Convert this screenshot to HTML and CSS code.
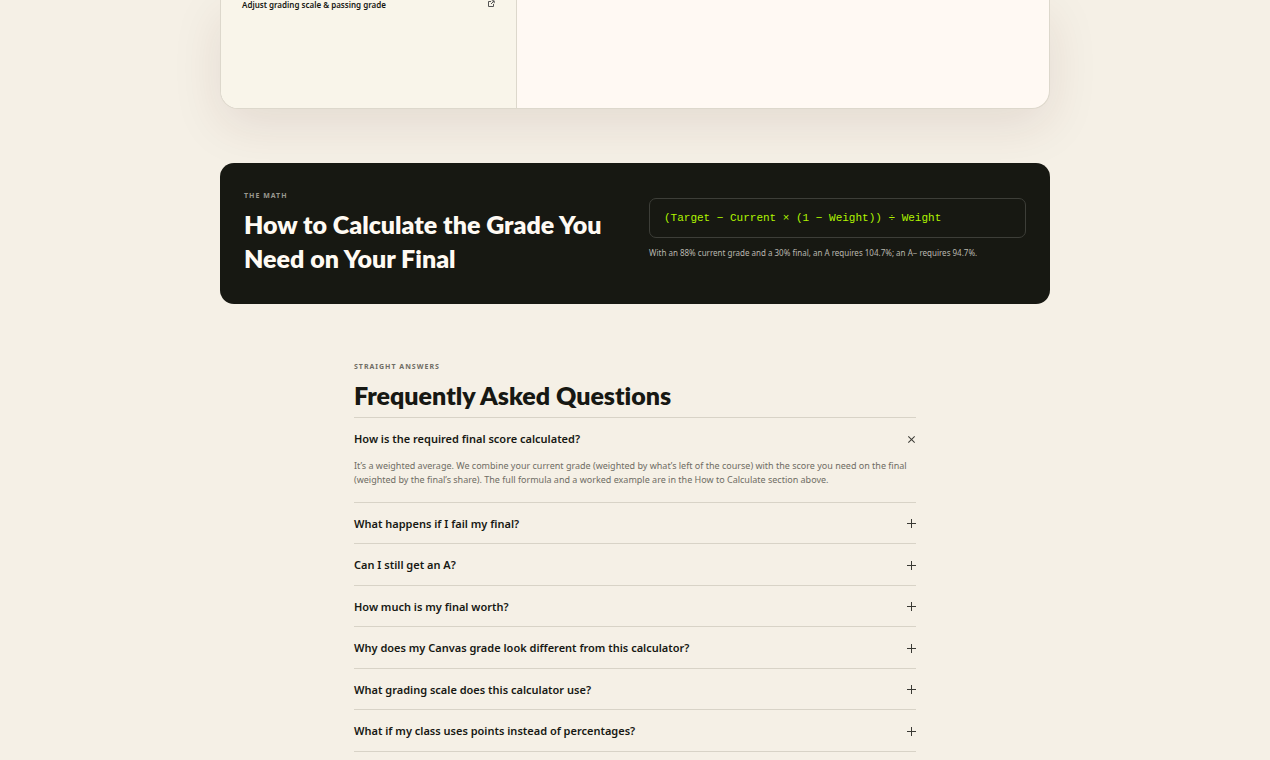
FILE: index.html
```html
<!DOCTYPE html>
<html lang="en">
<head>
    <meta charset="UTF-8">
    <meta name="viewport" content="width=device-width, initial-scale=1.0">
    <title>Final Grade Calculator</title>
    <link rel="stylesheet" href="styles.css">
</head>
<body>
    <main class="container">
        <section class="calculator">
            <div class="inputs">
                <a class="scale-link" href="#scale">
                    Adjust grading scale &amp; passing grade
                    <svg class="link-icon" viewBox="0 0 8 8" aria-hidden="true">
                        <path d="M4 1.5H1.5v5h5V4M4.8 .8h2.4v2.4M7 1 4 4"/>
                    </svg>
                </a>
            </div>
            <div class="results"></div>
        </section>

        <section class="math">
            <div>
                <p class="eyebrow">The math</p>
                <h2>How to Calculate the Grade You Need on Your Final</h2>
            </div>
            <div>
                <code class="formula">(Target − Current × (1 − Weight)) ÷ Weight</code>
                <p class="note">With an 88% current grade and a 30% final, an A requires 104.7%; an A− requires 94.7%.</p>
            </div>
        </section>

        <section class="faq">
            <p class="eyebrow">Straight answers</p>
            <h2>Frequently Asked Questions</h2>
            <div class="faq-list">
                <details open>
                    <summary>How is the required final score calculated?<span class="toggle"></span></summary>
                    <p class="answer">It’s a weighted average. We combine your current grade (weighted by what’s left of the course) with the score you need on the final (weighted by the final’s share). The full formula and a worked example are in the How to Calculate section above.</p>
                </details>
                <details>
                    <summary>What happens if I fail my final?<span class="toggle"></span></summary>
                </details>
                <details>
                    <summary>Can I still get an A?<span class="toggle"></span></summary>
                </details>
                <details>
                    <summary>How much is my final worth?<span class="toggle"></span></summary>
                </details>
                <details>
                    <summary>Why does my Canvas grade look different from this calculator?<span class="toggle"></span></summary>
                </details>
                <details>
                    <summary>What grading scale does this calculator use?<span class="toggle"></span></summary>
                </details>
                <details>
                    <summary>What if my class uses points instead of percentages?<span class="toggle"></span></summary>
                </details>
            </div>
        </section>
    </main>
</body>
</html>
```
FILE: styles.css
```css
* {
    box-sizing: border-box;
}
body {
    margin: 0;
    background: #f5f0e6;
    color: #171813;
    font-family: "Segoe UI", "Noto Sans", "Open Sans", sans-serif;
}
h2, p {
    margin: 0;
}
h2 {
    font-family: "Segoe UI", Lato, "Noto Sans", sans-serif;
    font-size: 25px;
    line-height: 34px;
    font-weight: 800;
    font-variant-ligatures: none;
}
.container {
    max-width: 830px;
    margin: 0 auto;
}
.calculator {
    display: grid;
    grid-template-columns: 296px 1fr;
    min-height: 109px;
    background: #fff9f3;
    border: 1px solid #ddd8cc;
    border-top: 0;
    border-radius: 0 0 18px 18px;
    box-shadow: 0 16px 50px rgba(75, 30, 30, 0.1);
    overflow: hidden;
}
.inputs {
    padding: 0 21px;
    background: #f9f5ea;
    border-right: 1px solid #ddd8cc;
}
.scale-link {
    display: flex;
    justify-content: space-between;
    color: inherit;
    font-size: 8px;
    line-height: 9px;
    font-weight: 600;
    text-decoration: none;
}
.link-icon {
    width: 8px;
    height: 8px;
    fill: none;
    stroke: #555;
    stroke-width: 1;
}
.eyebrow {
    color: #6f6d64;
    font-size: 7px;
    line-height: 12px;
    font-weight: 700;
    letter-spacing: 1px;
    text-transform: uppercase;
}
.math {
    display: grid;
    grid-template-columns: 1fr 1fr;
    gap: 28px;
    align-items: center;
    margin-top: 54px;
    padding: 27px 24px;
    background: #171812;
    color: #fffaf3;
    border-radius: 14px;
}
.math h2 {
    margin: 5px 0 2px;
}
.math .eyebrow {
    color: #99978f;
}
.formula {
    display: block;
    padding: 10px 14px;
    border: 1px solid #3d3e38;
    border-radius: 7px;
    color: #b0f500;
    font-family: "Courier New", "Liberation Mono", monospace;
    font-size: 11px;
    line-height: 18px;
}
.note {
    margin: 8px 0 9px;
    color: #b9b7af;
    font-size: 8px;
    line-height: 14px;
}
.faq {
    max-width: 562px;
    margin: 0 auto;
    padding: 57px 0 20px;
}
.faq h2 {
    margin: 5px 0;
}
.faq-list {
    border-top: 1px solid #d8d3c7;
}
details {
    border-bottom: 1px solid #d8d3c7;
}
summary {
    display: flex;
    justify-content: space-between;
    align-items: center;
    padding: 13px 0 11px;
    font-size: 11px;
    line-height: 1.5;
    font-weight: 600;
    list-style: none;
    cursor: pointer;
}
summary::-webkit-details-marker {
    display: none;
}
.toggle {
    width: 9px;
    height: 9px;
    background:
        linear-gradient(#3a3a34, #3a3a34) center / 9px 1px no-repeat,
        linear-gradient(#3a3a34, #3a3a34) center / 1px 9px no-repeat;
}
details[open] .toggle {
    transform: rotate(45deg);
}
.answer {
    padding: 0 6px 15px 0;
    color: #6f6d64;
    font-size: 9px;
    line-height: 14px;
}
```
